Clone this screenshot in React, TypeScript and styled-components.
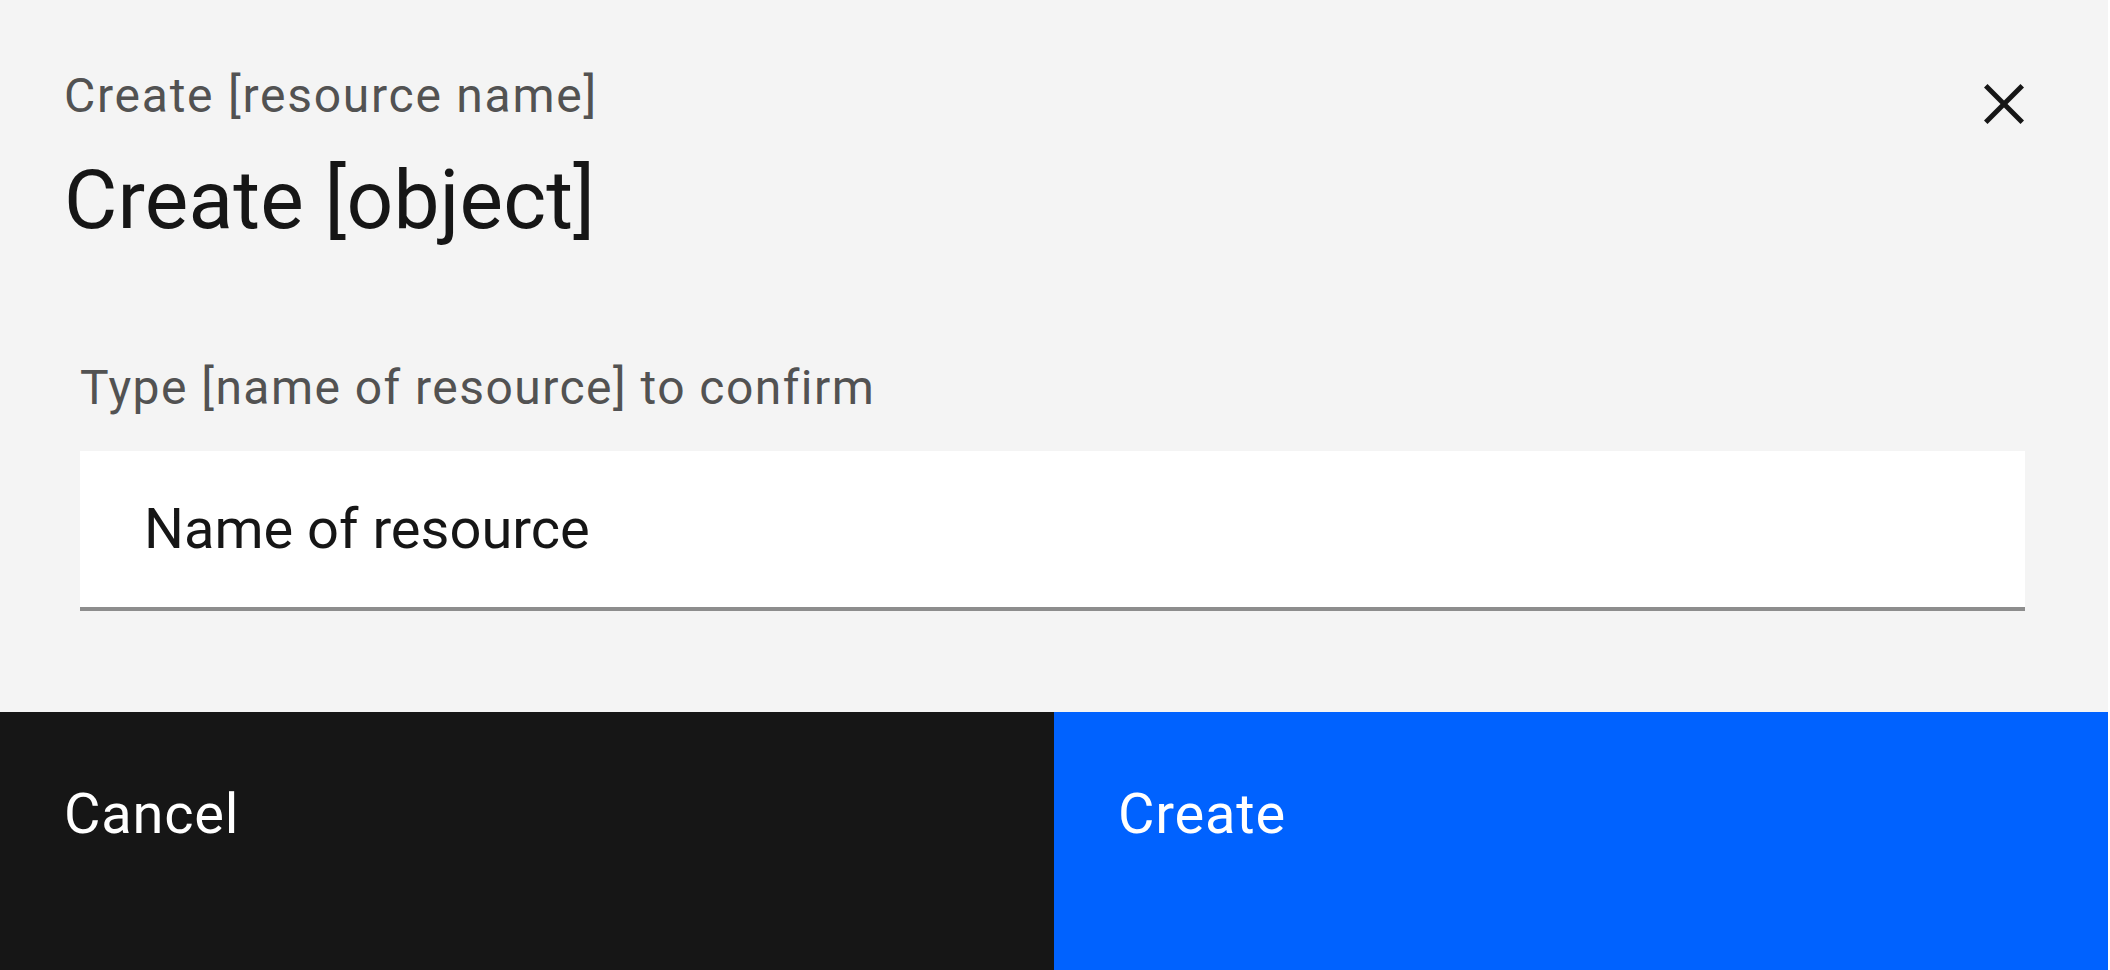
import React from 'react';
import styled, { createGlobalStyle } from 'styled-components';

const GlobalStyle = createGlobalStyle`
  html, body {
    margin: 0;
    padding: 0;
    background: #ffffff;
  }

  body {
    font-family: Roboto, "Liberation Sans", Arial, sans-serif;
    -webkit-font-smoothing: antialiased;
  }
`;

const Modal = styled.div`
  width: 2108px;
  min-height: 970px;
  display: flex;
  flex-direction: column;
  background: #f4f4f4;
`;

const Header = styled.header`
  display: flex;
  justify-content: space-between;
  align-items: flex-start;
  padding: 64px 64px 0 64px;
`;

const TitleBlock = styled.div`
  display: flex;
  flex-direction: column;
`;

const Subtitle = styled.p`
  margin: 0 0 16px;
  font-size: 48px;
  line-height: 64px;
  letter-spacing: 1.75px;
  color: #525252;
`;

const Heading = styled.h2`
  margin: 0;
  font-size: 82px;
  line-height: 112px;
  font-weight: 400;
  letter-spacing: 0.2px;
  color: #161616;
`;

const CloseButton = styled.button`
  width: 80px;
  height: 80px;
  padding: 0;
  border: none;
  background: transparent;
  cursor: pointer;
  display: flex;
  align-items: center;
  justify-content: center;
  color: #161616;
`;

const Body = styled.div`
  display: flex;
  flex-direction: column;
  padding: 100px 83px 101px 80px;
`;

const Label = styled.label`
  margin-bottom: 31px;
  font-size: 48px;
  line-height: 64px;
  letter-spacing: 1.45px;
  color: #525252;
`;

const TextInput = styled.input`
  box-sizing: border-box;
  width: 100%;
  height: 160px;
  padding: 0 64px;
  border: none;
  border-bottom: 4px solid #8d8d8d;
  outline: none;
  background: #ffffff;
  font-family: Roboto, "Liberation Sans", Arial, sans-serif;
  font-size: 56px;
  letter-spacing: 0;
  color: #161616;
`;

const Footer = styled.footer`
  display: grid;
  grid-template-columns: 1fr 1fr;
  height: 258px;
  margin-top: auto;
`;

const ActionButton = styled.button<{ $kind: 'secondary' | 'primary' }>`
  display: flex;
  align-items: flex-start;
  padding: 66px 64px 0 64px;
  border: none;
  cursor: pointer;
  text-align: left;
  font-family: Roboto, "Liberation Sans", Arial, sans-serif;
  font-size: 56px;
  line-height: 72px;
  letter-spacing: 0.8px;
  color: #ffffff;
  background: ${(p) => (p.$kind === 'primary' ? '#0062ff' : '#161616')};
`;

const CloseIcon = () => (
  <svg width="80" height="80" viewBox="0 0 32 32" fill="currentColor" aria-hidden="true">
    <path d="M24 9.4L22.6 8 16 14.6 9.4 8 8 9.4 14.6 16 8 22.6 9.4 24 16 17.4 22.6 24 24 22.6 17.4 16 24 9.4z" />
  </svg>
);

const App: React.FC = () => {
  return (
    <>
      <GlobalStyle />
      <Modal role="dialog" aria-labelledby="modal-heading">
        <Header>
          <TitleBlock>
            <Subtitle>Create [resource name]</Subtitle>
            <Heading id="modal-heading">Create [object]</Heading>
          </TitleBlock>
          <CloseButton aria-label="Close">
            <CloseIcon />
          </CloseButton>
        </Header>

        <Body>
          <Label htmlFor="resource-name">Type [name of resource] to confirm</Label>
          <TextInput id="resource-name" type="text" defaultValue="Name of resource" />
        </Body>

        <Footer>
          <ActionButton $kind="secondary">Cancel</ActionButton>
          <ActionButton $kind="primary">Create</ActionButton>
        </Footer>
      </Modal>
    </>
  );
};

export default App;
